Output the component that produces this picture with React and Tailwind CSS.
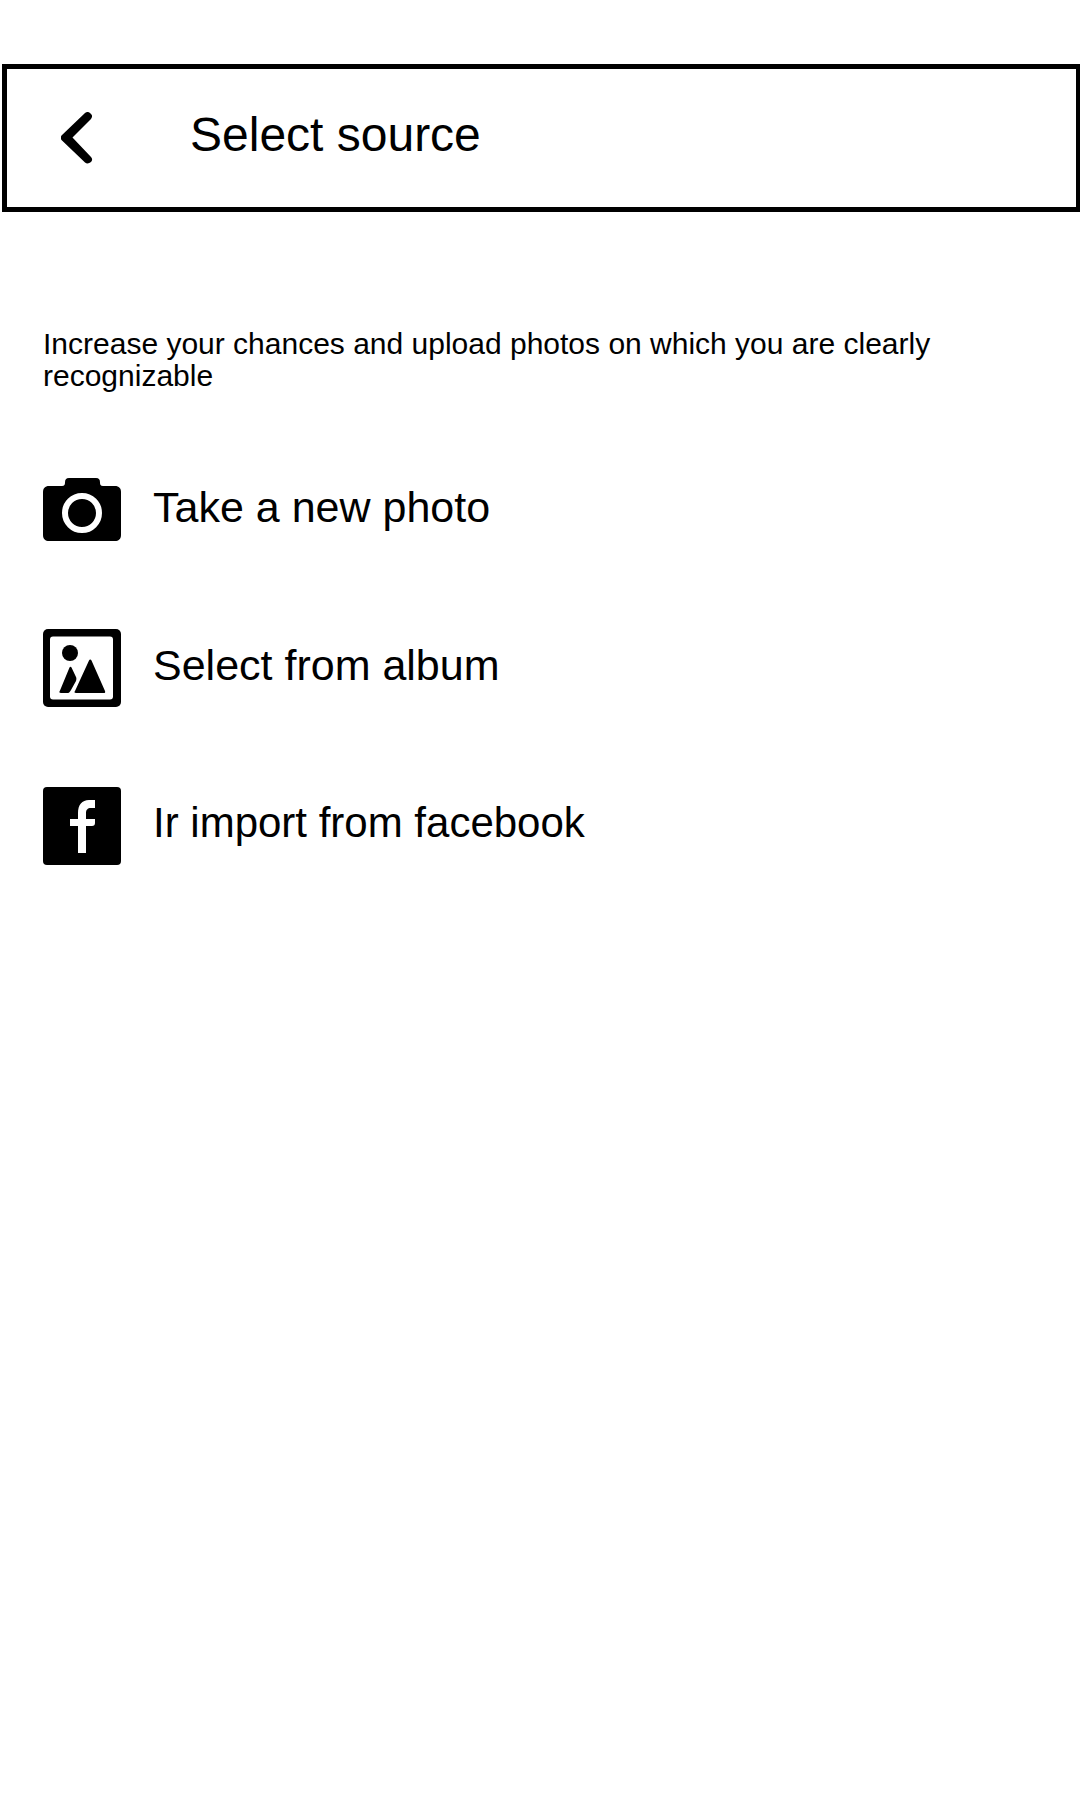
function BackIcon() {
  return (
    <svg viewBox="0 0 32 52" className="h-[52px] w-8" aria-hidden="true">
      <path d="M24 1c2-1.500 4-1 5.500.5 2 1.500 2 3.500.5 5.500L11.500 25.500 30 45c1.500 1.500 1.500 3.500 0 5-2 1.500-4 2-6 .5L.5 28c-1-1.500-1-3 0-4.500z" />
    </svg>
  );
}

function CameraIcon() {
  return (
    <svg viewBox="0 0 78 64" className="h-16 w-[78px]" aria-hidden="true">
      <path d="M6 8h13c2.500 0 3-1.500 3-3.500C22 1.500 23 0 26 0h27c3 0 4 1.500 4 4.500C57 6.500 57.500 8 60 8h12c4 0 6 2.500 6 6v43c0 4-2.500 6-6 6H6c-3.500 0-6-2-6-6V14c0-3.500 2-6 6-6z" />
      <circle cx="39" cy="35" r="17" fill="none" stroke="#fff" strokeWidth="6" />
    </svg>
  );
}

function AlbumIcon() {
  return (
    <svg viewBox="0 0 78 78" className="h-[78px] w-[78px]" aria-hidden="true">
      <rect width="78" height="78" rx="5" />
      <rect x="7" y="7.500" width="63" height="63" rx="3" fill="#fff" />
      <circle cx="27" cy="24" r="8" />
      <path d="M26.500 38.500c.5-1 1.500-1 2 0L33 48c.5 1 .5 2 0 4l-5 9c-1.500 2.500-2 3-4 3h-6c-2 0-2-1-1-2.500z" />
      <path d="M46 31.500c.5-1.500 2-1.500 2.500 0L62 62c.5 1.500 0 2-1 2H33c-1.500 0-2-1-1-2z" />
    </svg>
  );
}

function FacebookIcon() {
  return (
    <svg viewBox="0 0 78 78" className="h-[78px] w-[78px]" aria-hidden="true">
      <rect width="78" height="78" rx="4" />
      <path fill="#fff" d="M52 13v8h-4c-3.500 0-5 2-5 5v6h9v4c0 2-1 3-3 3h-6v27h-8V39h-8v-7h8v-6c0-8 4-13 11-13z" />
    </svg>
  );
}

const options = [
  { label: "Take a new photo", Icon: CameraIcon, size: "text-[43px]" },
  { label: "Select from album", Icon: AlbumIcon, size: "text-[43px]" },
  { label: "Ir import from facebook", Icon: FacebookIcon, size: "text-[42px]" },
];

export default function App() {
  return (
    <div className="min-h-screen bg-white pt-16 font-['Liberation_Sans',Arial,sans-serif] text-black">
      <header className="ml-0.5 flex h-[148px] items-center border-5 border-r-4 border-black pl-[54px]">
        <button type="button" aria-label="Back" className="shrink-0">
          <BackIcon />
        </button>
        <h1 className="pb-1.5 pl-[97px] text-5xl">Select source</h1>
      </header>
      <main className="px-[43px] pt-[116px]">
        <p className="text-[30px] leading-8">
          Increase your chances and upload photos on which you are clearly recognizable
        </p>
        <ul className="flex flex-col gap-20 pt-[79px]">
          {options.map(({ label, Icon, size }) => (
            <li key={label}>
              <button type="button" className="flex h-[78px] w-full items-center gap-8 text-left">
                <span className="shrink-0">
                  <Icon />
                </span>
                <span className={`pb-1.5 leading-12 ${size}`}>{label}</span>
              </button>
            </li>
          ))}
        </ul>
      </main>
    </div>
  );
}
